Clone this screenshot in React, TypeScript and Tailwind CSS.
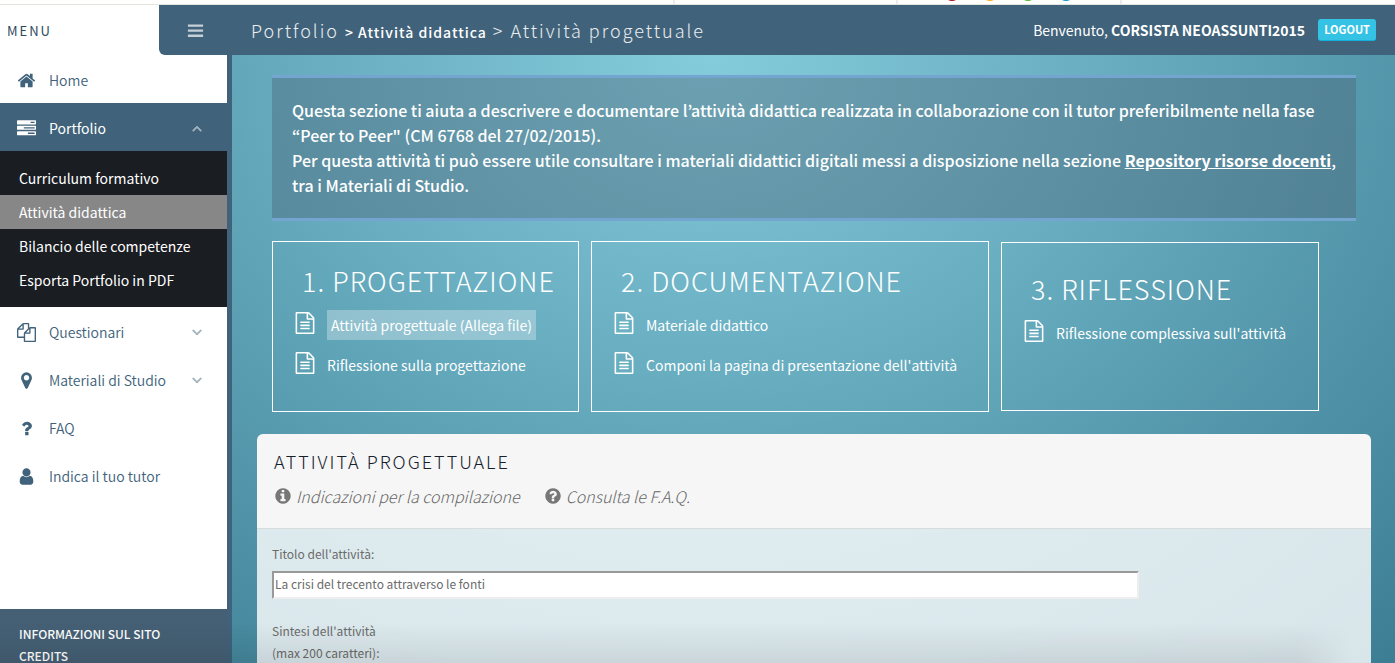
import type { ReactNode } from "react";
import { clsx } from "clsx";

const CIRCLE =
  "M1664 896q0 209-103 385.5t-279.5 279.5-385.5 103-385.5-103-279.5-279.5-103-385.5 103-385.5 279.5-279.5 385.5-103 385.5 103 279.5 279.5 103 385.5z";

const ICONS = {
  bars: "M96 1312h1600v256h-1600zM96 784h1600v256h-1600zM96 256h1600v256h-1600z",
  home: "M1472 992v480q0 26-19 45t-45 19h-384v-384h-256v384h-384q-26 0-45-19t-19-45v-480q0-1 .5-3t.5-3l575-474 575 474q1 2 1 6zm223-69l-62 74q-8 9-21 11h-3q-13 0-21-7l-692-577-692 577q-12 8-24 7-13-2-21-11l-62-74q-8-10-7-23.5t11-21.5l719-599q32-26 76-26t76 26l244 204v-195q0-14 9-23t23-9h192q14 0 23 9t9 23v408l219 182q10 8 11 21.5t-7 23.5z",
  tasks:
    "M1024 1408h640v-128h-640v128zm-384-512h1024v-128h-1024v128zm640-512h384v-128h-384v128zm512 832v256q0 26-19 45t-45 19h-1664q-26 0-45-19t-19-45v-256q0-26 19-45t45-19h1664q26 0 45 19t19 45zm0-512v256q0 26-19 45t-45 19h-1664q-26 0-45-19t-19-45v-256q0-26 19-45t45-19h1664q26 0 45 19t19 45zm0-512v256q0 26-19 45t-45 19h-1664q-26 0-45-19t-19-45v-256q0-26 19-45t45-19h1664q26 0 45 19t19 45z",
  files:
    "M1696 384q40 0 68 28t28 68v1216q0 40-28 68t-68 28h-960q-40 0-68-28t-28-68v-288h-544q-40 0-68-28t-28-68v-672q0-40 20-88t48-76l408-408q28-28 76-48t88-20h416q40 0 68 28t28 68v328q68-40 128-40h416zm-544 213l-299 299h299v-299zm-640-384l-299 299h299v-299zm196 647l316-316v-416h-384v416q0 40-28 68t-68 28h-416v640h512v-256q0-40 20-88t48-76zm956 804v-1152h-384v416q0 40-28 68t-68 28h-416v640h896z",
  marker:
    "M1152 640q0-106-75-181t-181-75-181 75-75 181 75 181 181 75 181-75 75-181zm256 0q0 109-33 179l-364 774q-16 33-47.5 52t-67.5 19-67.5-19-46.5-52l-365-774q-33-70-33-179 0-212 150-362t362-150 362 150 150 362z",
  question:
    "M1088 1256v240q0 16-12 28t-28 12h-240q-16 0-28-12t-12-28v-240q0-16 12-28t28-12h240q16 0 28 12t12 28zm316-600q0 54-15.5 101t-35 76.5-55 59.5-57.5 43.5-61 35.5q-41 23-68.5 65t-27.5 67q0 17-12 32.5t-28 15.5h-240q-15 0-25.5-18.5t-10.5-37.5v-45q0-83 65-156.5t143-108.5q59-27 84-56t25-76q0-42-46.5-74t-107.5-32q-65 0-108 29-35 25-107 115-13 16-31 16-12 0-25-8l-164-125q-13-10-15.5-25t5.5-28q160-266 464-266 80 0 161 31t146 83 106 127.5 41 158.5z",
  user: "M1536 1399q0 109-62.5 187t-150.5 78h-854q-88 0-150.5-78t-62.5-187q0-85 8.5-160.5t31.5-152 58.5-131 94-89 134.5-34.5q131 128 313 128t313-128q76 0 134.5 34.5t94 89 58.5 131 31.5 152 8.5 160.5zm-256-887q0 159-112.5 271.5t-271.5 112.5-271.5-112.5-112.5-271.5 112.5-271.5 271.5-112.5 271.5 112.5 112.5 271.5z",
  file: "M1596 380q28 28 48 76t20 88v1152q0 40-28 68t-68 28h-1344q-40 0-68-28t-28-68v-1600q0-40 28-68t68-28h896q40 0 88 20t76 48zm-444-244v376h376q-10-29-22-41l-313-313q-12-12-41-22zm384 1528v-1024h-416q-40 0-68-28t-28-68v-416h-768v1536h1280zm-1024-864q0-14 9-23t23-9h704q14 0 23 9t9 23v64q0 14-9 23t-23 9h-704q-14 0-23-9t-9-23v-64zm736 224q14 0 23 9t9 23v64q0 14-9 23t-23 9h-704q-14 0-23-9t-9-23v-64q0-14 9-23t23-9h704zm0 256q14 0 23 9t9 23v64q0 14-9 23t-23 9h-704q-14 0-23-9t-9-23v-64q0-14 9-23t23-9h704z",
  info:
    "M1152 1376v-160q0-14-9-23t-23-9h-96v-512q0-14-9-23t-23-9h-320q-14 0-23 9t-9 23v160q0 14 9 23t23 9h96v320h-96q-14 0-23 9t-9 23v160q0 14 9 23t23 9h448q14 0 23-9t9-23zm-128-896v-160q0-14-9-23t-23-9h-192q-14 0-23 9t-9 23v160q0 14 9 23t23 9h192q14 0 23-9t9-23z" +
    CIRCLE,
  help:
    "M1024 1376v-192q0-14-9-23t-23-9h-192q-14 0-23 9t-9 23v192q0 14 9 23t23 9h192q14 0 23-9t9-23zm256-672q0-88-55.5-163t-138.5-116-170-41q-243 0-371 213-15 24 8 42l132 100q7 6 19 6 16 0 25-12 53-68 86-92 34-24 86-24 48 0 85.5 26t37.5 59q0 38-20 61t-68 45q-63 28-115.5 86.5t-52.5 125.5v36q0 14 9 23t23 9h192q14 0 23-9t9-23q0-19 21.5-49.5t54.5-49.5q32-18 49-28.5t46-35 44.5-48 28-60.5 12.5-81z" +
    CIRCLE,
  down: "M1395 736q0 13-10 23l-466 466q-10 10-23 10t-23-10l-466-466q-10-10-10-23t10-23l50-50q10-10 23-10t23 10l393 393 393-393q10-10 23-10t23 10l50 50q10 10 10 23z",
  up: "M1395 1184q0 13-10 23l-50 50q-10 10-23 10t-23-10l-393-393-393 393q-10 10-23 10t-23-10l-50-50q-10-10-10-23t10-23l466-466q10-10 23-10t23 10l466 466q10 10 10 23z",
};

type IconName = keyof typeof ICONS;

function Icon({ name, className }: { name: IconName; className?: string }) {
  return (
    <svg
      viewBox="0 0 1792 1792"
      fill="currentColor"
      fillRule="evenodd"
      aria-hidden="true"
      className={clsx("shrink-0", className)}
    >
      <path d={ICONS[name]} />
    </svg>
  );
}

interface NavItemProps {
  icon: IconName;
  label: string;
  caret?: "up" | "down";
  active?: boolean;
}

function NavItem({ icon, label, caret, active }: NavItemProps) {
  return (
    <a
      href="#"
      className={clsx(
        "flex h-12 items-center pt-0.5 pr-[22px] pl-[17px] text-[14px]",
        active ? "bg-[#40627a] text-white" : "font-[350] text-[#40627a]"
      )}
    >
      <Icon name={icon} className="mr-[13px] size-[19px]" />
      <span className="flex-1">{label}</span>
      {caret && (
        <Icon name={caret} className="size-4 stroke-current stroke-[90px] opacity-50" />
      )}
    </a>
  );
}

const SUBMENU = [
  "Curriculum formativo",
  "Attività didattica",
  "Bilancio delle competenze",
  "Esporta Portfolio in PDF",
];

function Sidebar() {
  return (
    <aside className="flex w-[232px] shrink-0 flex-col border-r-[5px] border-[#40627a] bg-[#456075]">
      <nav className="shrink-0 bg-white pb-[110px]">
        <NavItem icon="home" label="Home" />
        <NavItem icon="tasks" label="Portfolio" caret="up" active />
        <ul className="bg-[#1a1d22] py-2.5">
          {SUBMENU.map((label) => (
            <li key={label}>
              <a
                href="#"
                className={clsx(
                  "block pl-[19px] text-[14px] leading-[34px] text-white",
                  label === "Attività didattica" && "bg-[#878787]"
                )}
              >
                {label}
              </a>
            </li>
          ))}
        </ul>
        <NavItem icon="files" label="Questionari" caret="down" />
        <NavItem icon="marker" label="Materiali di Studio" caret="down" />
        <NavItem icon="question" label="FAQ" />
        <NavItem icon="user" label="Indica il tuo tutor" />
      </nav>
      <div className="flex-1 px-[19px] pt-3.5 text-[12px] leading-[22px] font-medium text-white">
        <a href="#" className="block">
          INFORMAZIONI SUL SITO
        </a>
        <a href="#" className="block">
          CREDITS
        </a>
      </div>
    </aside>
  );
}

function TopStrip() {
  return (
    <div className="flex h-[5px] shrink-0 overflow-hidden border-b border-[#e4e4de] bg-white">
      <div className="w-[48.4%] border-r-2 border-[#ececec]" />
      <div className="w-[16%] border-r-2 border-[#ececec]" />
      <div className="flex w-[16%] justify-center border-r-2 border-[#ececec]">
        <svg viewBox="0 0 130 4" className="h-1 w-[130px]" aria-hidden="true">
          <circle cx="8" cy="-7" r="8" fill="#b00d1e" />
          <circle cx="46" cy="-7" r="8" fill="#fbae17" />
          <circle cx="84" cy="-7" r="8" fill="#55b82c" />
          <circle cx="122" cy="-7" r="8" fill="#1590c8" />
        </svg>
      </div>
    </div>
  );
}

function Header() {
  return (
    <div className="flex h-[50px] shrink-0 bg-white">
      <div className="w-[159px] shrink-0 pl-[7px] text-[13px] leading-[52px] tracking-[2px] text-[#2f4a60]">
        MENU
      </div>
      <header className="flex flex-1 items-center rounded-bl-md bg-[#40627a] pr-[19px] pl-7 text-white">
        <button type="button" aria-label="Menu" className="mr-[47px] text-white/70">
          <Icon name="bars" className="size-[17px]" />
        </button>
        <p className="flex-1 text-[18px] font-light tracking-[2px] text-white/90">
          Portfolio{" "}
          <span className="text-[14px] font-medium tracking-[1px] text-white">
            &gt; Attività didattica
          </span>{" "}
          &gt; Attività progettuale
        </p>
        <p className="mr-[13px] text-[14px]">
          Benvenuto, <b>CORSISTA NEOASSUNTI2015</b>
        </p>
        <button
          type="button"
          className="h-[22px] rounded-[3px] border-b border-[#12b0da] bg-[#35c3e5] px-1.5 text-[11px] font-bold"
        >
          LOGOUT
        </button>
      </header>
    </div>
  );
}

interface StepCardProps {
  title: string;
  links: string[];
  selected?: string;
  className?: string;
}

function StepCard({ title, links, selected, className }: StepCardProps) {
  return (
    <section className={clsx("border border-white pb-[26px] pl-[21px] text-white", className)}>
      <h2 className="pt-[19px] pb-[5px] pl-2 text-[27px] leading-[39px] font-light tracking-[1px] whitespace-nowrap">
        {title}
      </h2>
      <ul>
        {links.map((label) => (
          <li key={label} className="flex h-10 items-center gap-[11px]">
            <Icon name="file" className="mb-1 size-[22px]" />
            <a
              href="#"
              className={clsx(
                "text-[14px] leading-[30px] whitespace-nowrap",
                label === selected && "bg-white/30 px-1"
              )}
            >
              {label}
            </a>
          </li>
        ))}
      </ul>
    </section>
  );
}

function Hint({ icon, children }: { icon: IconName; children: ReactNode }) {
  return (
    <a href="#" className="flex items-center gap-1">
      <Icon name={icon} className="size-[18px] text-[#777777]" />
      <span className="font-light italic">{children}</span>
    </a>
  );
}

function ActivityPanel() {
  return (
    <section className="flex flex-1 flex-col overflow-hidden rounded-t-md">
      <div className="h-[95px] shrink-0 border-b border-[#d8dadb] bg-[#f6f6f6] px-[17px] pt-[13px]">
        <h1 className="text-[18px] leading-7 font-light tracking-[2px] text-[#15202b]">
          ATTIVITÀ PROGETTUALE
        </h1>
        <div className="flex gap-6 pt-2 text-[16px] leading-[26px] text-[#666666]">
          <Hint icon="info">Indicazioni per la compilazione</Hint>
          <Hint icon="help">Consulta le F.A.Q.</Hint>
        </div>
      </div>
      <form className="flex-1 bg-white/80 px-[15px] pt-3.5 text-[12px] leading-[22px] text-[#6b6b6b]">
        <label htmlFor="titolo" className="block">
          Titolo dell'attività:
        </label>
        <input
          id="titolo"
          type="text"
          defaultValue="La crisi del trecento attraverso le fonti"
          className="mt-1.5 mb-[21px] block h-7 w-4/5 border-2 border-t-[#999999] border-r-[#eeeeee] border-b-[#eeeeee] border-l-[#999999] bg-white px-px pb-1"
        />
        <label htmlFor="sintesi" className="block">
          Sintesi dell'attività
          <br />
          (max 200 caratteri):
        </label>
        <textarea id="sintesi" className="mt-1.5 block h-24 w-4/5 border-2 border-[#999999] bg-white" />
      </form>
    </section>
  );
}

export default function App() {
  return (
    <div className="relative flex h-screen flex-col overflow-hidden font-['Noto_Sans_CJK_JP','Noto_Sans',sans-serif]">
      <TopStrip />
      <Header />
      <div className="flex min-h-0 flex-1">
        <Sidebar />
        <main className="flex min-w-0 flex-1 flex-col bg-[radial-gradient(ellipse_90%_140%_at_41%_0%,#84ccdc_0%,#5fa3b7_50%,#3a7b91_100%)] pt-5 pr-6 pl-[25px]">
          <div className="mx-[15px] border-y-[3px] border-[#73a5d0] bg-[#4a6274]/40 p-5 text-[16px] leading-[25px] font-medium text-white">
            <p>
              Questa sezione ti aiuta a descrivere e documentare l’attività didattica realizzata in
              collaborazione con il tutor preferibilmente nella fase “Peer to Peer" (CM 6768 del
              27/02/2015).
            </p>
            <p>
              Per questa attività ti può essere utile consultare i materiali didattici digitali messi
              a disposizione nella sezione{" "}
              <a href="#" className="font-bold underline">
                Repository risorse docenti
              </a>
              , tra i Materiali di Studio.
            </p>
          </div>
          <div className="mt-5 mr-[52px] mb-[22px] ml-[15px] grid grid-cols-[307fr_398fr_318fr] gap-3">
            <StepCard
              title="1. PROGETTAZIONE"
              links={["Attività progettuale (Allega file)", "Riflessione sulla progettazione"]}
              selected="Attività progettuale (Allega file)"
            />
            <StepCard
              title="2. DOCUMENTAZIONE"
              links={["Materiale didattico", "Componi la pagina di presentazione dell'attività"]}
            />
            <StepCard
              title="3. RIFLESSIONE"
              links={["Riflessione complessiva sull'attività"]}
              className="my-px pt-[7px]"
            />
          </div>
          <ActivityPanel />
        </main>
      </div>
      {/* Fade along the bottom edge */}
      <div className="pointer-events-none absolute bottom-0 left-0 h-10 w-[97%] bg-linear-to-t from-black/8 to-transparent mask-r-from-96% mask-r-to-100%" />
    </div>
  );
}
